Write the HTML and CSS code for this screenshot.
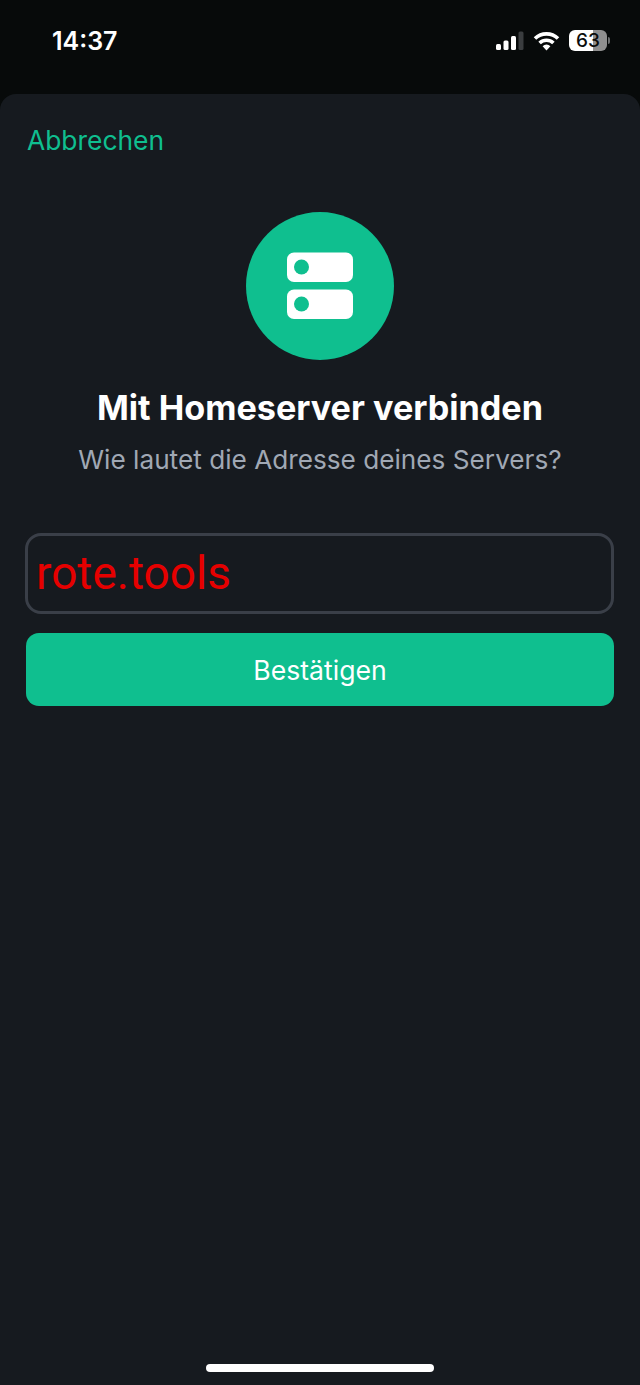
FILE: index.html
```html
<!DOCTYPE html>
<html lang="de">
<head>
  <meta charset="UTF-8">
  <title>Mit Homeserver verbinden</title>
  <link rel="stylesheet" href="styles.css">
</head>
<body>
  <div class="status-bar">
    <span class="time">14:37</span>
    <div class="status-icons">
      <svg class="signal" width="28" height="20" viewBox="0 0 28 20">
        <rect x="0" y="13" width="5" height="6" rx="1.5" fill="#fff"/>
        <rect x="7.5" y="9.5" width="5" height="9.5" rx="1.5" fill="#fff"/>
        <rect x="15" y="5" width="5" height="14" rx="1.5" fill="#fff"/>
        <rect x="22.5" y="0.5" width="5" height="18.5" rx="1.5" fill="#3a3d3f"/>
      </svg>
      <svg class="wifi" width="27" height="20" viewBox="0 0 27 20">
        <path d="M2 7.5 A16.5 16.5 0 0 1 25 7.5" fill="none" stroke="#fff" stroke-width="3.6"/>
        <path d="M6.6 12 A10 10 0 0 1 20.4 12" fill="none" stroke="#fff" stroke-width="3.6"/>
        <path d="M9.6 15.2 L13.5 19.5 L17.4 15.2 A5.6 5.6 0 0 0 9.6 15.2 Z" fill="#fff"/>
      </svg>
      <div class="battery">
        <div class="battery-body">63</div>
        <div class="battery-cap"></div>
      </div>
    </div>
  </div>

  <main class="sheet">
    <a class="cancel">Abbrechen</a>

    <div class="server-badge">
      <svg width="68" height="68" viewBox="0 0 68 68">
        <rect x="1" y="0.5" width="66" height="29.5" rx="7" fill="#fff"/>
        <rect x="1" y="37.5" width="66" height="29.5" rx="7" fill="#fff"/>
        <circle cx="15.5" cy="15" r="7.5" fill="#0fbf8f"/>
        <circle cx="15.5" cy="52" r="7.5" fill="#0fbf8f"/>
      </svg>
    </div>

    <h1>Mit Homeserver verbinden</h1>
    <p class="subtitle">Wie lautet die Adresse deines Servers?</p>

    <div class="address-input">rote.tools</div>
    <button class="confirm">Bestätigen</button>
  </main>

  <div class="home-indicator"></div>
</body>
</html>
```

FILE: styles.css
```css
* {
  box-sizing: border-box;
}
html, body {
  margin: 0;
  height: 100%;
}
body {
  font-family: Inter, "Liberation Sans", sans-serif;
  background: #070a0a;
  color: #fff;
  display: flex;
  flex-direction: column;
  height: 1385px;
  overflow: hidden;
  position: relative;
}
.status-bar {
  height: 94px;
  flex-shrink: 0;
  display: flex;
  justify-content: space-between;
  align-items: flex-start;
  padding: 26px 30px 0 52px;
}
.time {
  font-size: 25px;
  font-weight: 600;
  line-height: 30px;
}
.status-icons {
  display: flex;
  align-items: center;
  gap: 9px;
  padding-top: 4px;
}
.battery {
  display: flex;
  align-items: center;
  gap: 1px;
}
.battery-body {
  width: 38px;
  height: 21px;
  border-radius: 6px;
  background: linear-gradient(to right, #fff 63%, #8f8f8f 63%);
  text-align: center;
  font-size: 19px;
  font-weight: 500;
  line-height: 21px;
  color: #0a0c0c;
}
.battery-cap {
  width: 2px;
  height: 7px;
  border-radius: 0 2px 2px 0;
  background: #6d6f70;
}
.sheet {
  flex: 1;
  background: #161a1f;
  border-radius: 16px 16px 0 0;
  padding: 0 26px;
  display: flex;
  flex-direction: column;
  align-items: center;
}
.cancel {
  align-self: flex-start;
  margin-top: 30px;
  padding-left: 1px;
  font-size: 26.4px;
  line-height: 32px;
  color: #0fbf8f;
}
.server-badge {
  width: 148px;
  height: 148px;
  margin-top: 56px;
  border-radius: 50%;
  background: #0fbf8f;
  display: flex;
  align-items: center;
  justify-content: center;
}
h1 {
  margin: 27px 0 0;
  font-size: 34.2px;
  line-height: 42px;
  font-weight: 700;
  color: #fff;
}
.subtitle {
  margin: 15px 0 0;
  font-size: 26.2px;
  line-height: 32px;
  color: #a0a8b4;
}
.address-input {
  width: 589px;
  height: 81px;
  margin-top: 57px;
  margin-left: -1px;
  border: 3px solid #3a3f48;
  border-radius: 16px;
  padding-left: 8px;
  font-family: Roboto, "Liberation Sans", sans-serif;
  font-size: 46px;
  line-height: 75px;
  color: #e60000;
}
.confirm {
  width: 588px;
  height: 73px;
  margin-top: 19px;
  border: none;
  border-radius: 13px;
  background: #0fbf8f;
  color: #fff;
  font-family: Inter, "Liberation Sans", sans-serif;
  font-size: 26.6px;
}
.home-indicator {
  position: absolute;
  left: 206px;
  bottom: 13px;
  width: 228px;
  height: 8px;
  border-radius: 4px;
  background: #fff;
}
```
